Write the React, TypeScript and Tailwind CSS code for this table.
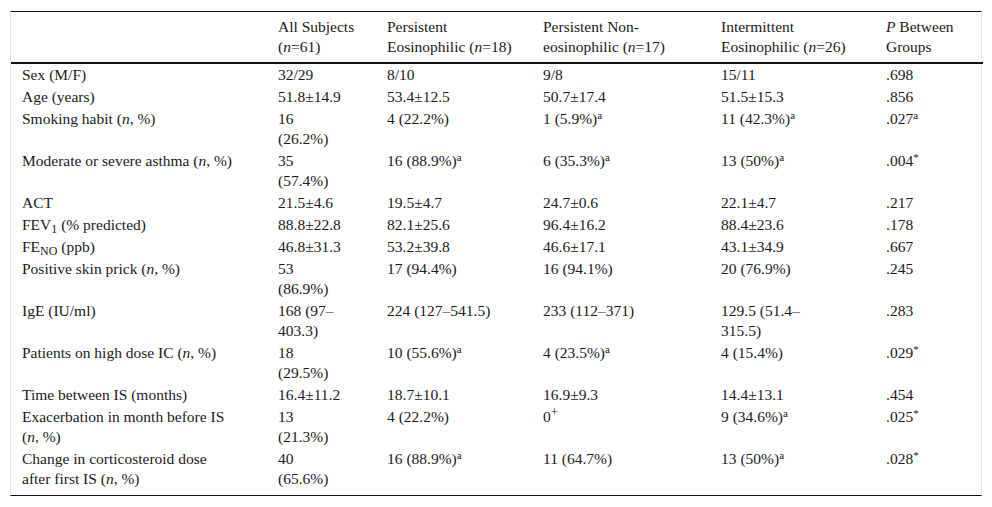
const A = () => <sup className="text-[11px]">a</sup>;
const S = () => <sup className="text-[11px]">*</sup>;

const rows: [React.ReactNode, React.ReactNode, React.ReactNode, React.ReactNode, React.ReactNode, React.ReactNode][] = [
  ["Sex (M/F)", "32/29", "8/10", "9/8", "15/11", ".698"],
  ["Age (years)", "51.8±14.9", "53.4±12.5", "50.7±17.4", "51.5±15.3", ".856"],
  [
    <>Smoking habit (<i>n</i>, %)</>,
    <>16<br />(26.2%)</>,
    "4 (22.2%)",
    <>1 (5.9%)<A /></>,
    <>11 (42.3%)<A /></>,
    <>.027<A /></>,
  ],
  [
    <>Moderate or severe asthma (<i>n</i>, %)</>,
    <>35<br />(57.4%)</>,
    <>16 (88.9%)<A /></>,
    <>6 (35.3%)<A /></>,
    <>13 (50%)<A /></>,
    <>.004<S /></>,
  ],
  ["ACT", "21.5±4.6", "19.5±4.7", "24.7±0.6", "22.1±4.7", ".217"],
  [
    <>FEV<sub className="text-[12px]">1</sub> (% predicted)</>,
    "88.8±22.8",
    "82.1±25.6",
    "96.4±16.2",
    "88.4±23.6",
    ".178",
  ],
  [
    <>FE<sub className="text-[12px]">NO</sub> (ppb)</>,
    "46.8±31.3",
    "53.2±39.8",
    "46.6±17.1",
    "43.1±34.9",
    ".667",
  ],
  [
    <>Positive skin prick (<i>n</i>, %)</>,
    <>53<br />(86.9%)</>,
    "17 (94.4%)",
    "16 (94.1%)",
    "20 (76.9%)",
    ".245",
  ],
  [
    "IgE (IU/ml)",
    <>168 (97–<br />403.3)</>,
    "224 (127–541.5)",
    "233 (112–371)",
    <>129.5 (51.4–<br />315.5)</>,
    ".283",
  ],
  [
    <>Patients on high dose IC (<i>n</i>, %)</>,
    <>18<br />(29.5%)</>,
    <>10 (55.6%)<A /></>,
    <>4 (23.5%)<A /></>,
    "4 (15.4%)",
    <>.029<S /></>,
  ],
  ["Time between IS (months)", "16.4±11.2", "18.7±10.1", "16.9±9.3", "14.4±13.1", ".454"],
  [
    <>Exacerbation in month before IS<br />(<i>n</i>, %)</>,
    <>13<br />(21.3%)</>,
    "4 (22.2%)",
    <>0<sup className="text-[13px]">+</sup></>,
    <>9 (34.6%)<A /></>,
    <>.025<S /></>,
  ],
  [
    <>Change in corticosteroid dose<br />after first IS (<i>n</i>, %)</>,
    <>40<br />(65.6%)</>,
    <>16 (88.9%)<A /></>,
    "11 (64.7%)",
    <>13 (50%)<A /></>,
    <>.028<S /></>,
  ],
];

export default function App() {
  return (
    <div className="bg-white w-[992px] h-[507px] pt-[11px] pl-[10px] font-['Liberation_Serif',serif] text-[15.5px] leading-[20px] text-[#1a1a1a]">
      <div className="w-[972px] border-x border-[#e6e6e6] border-t border-t-[#111] border-b border-b-[#111] pb-[5px]">
        <table className="w-full table-fixed border-collapse">
          <colgroup>
            <col className="w-[256px]" />
            <col className="w-[109px]" />
            <col className="w-[156px]" />
            <col className="w-[178px]" />
            <col className="w-[165px]" />
            <col className="w-[108px]" />
          </colgroup>
          <thead>
            <tr className="border-b-2 border-[#111] align-top">
              <th className="pl-[11px] py-[5px] text-left font-normal"></th>
              <th className="pl-[11px] py-[5px] text-left font-normal whitespace-nowrap">
                All Subjects
                <br />(<i>n</i>=61)
              </th>
              <th className="pl-[11px] py-[5px] text-left font-normal whitespace-nowrap">
                Persistent
                <br />
                Eosinophilic (<i>n</i>=18)
              </th>
              <th className="pl-[11px] py-[5px] text-left font-normal whitespace-nowrap">
                Persistent Non-
                <br />
                eosinophilic (<i>n</i>=17)
              </th>
              <th className="pl-[11px] py-[5px] text-left font-normal whitespace-nowrap">
                Intermittent
                <br />
                Eosinophilic (<i>n</i>=26)
              </th>
              <th className="pl-[11px] py-[5px] text-left font-normal whitespace-nowrap">
                <i>P</i> Between
                <br />
                Groups
              </th>
            </tr>
          </thead>
          <tbody>
            {rows.map((r, i) => (
              <tr key={i} className="align-top">
                {r.map((c, j) => (
                  <td key={j} className="pl-[11px] py-px whitespace-nowrap">
                    {c}
                  </td>
                ))}
              </tr>
            ))}
          </tbody>
        </table>
      </div>
    </div>
  );
}
